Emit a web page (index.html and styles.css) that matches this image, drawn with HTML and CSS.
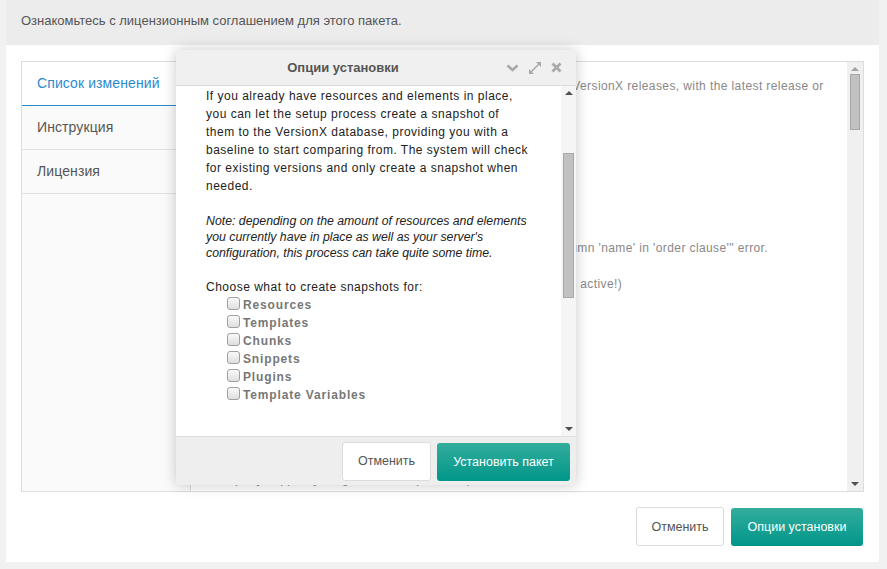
FILE: index.html
```html
<!DOCTYPE html>
<html lang="ru">
<head>
<meta charset="utf-8">
<title>Опции установки</title>
<link rel="stylesheet" href="styles.css">
</head>
<body>
<div class="panel">
  <div class="panel-head">Ознакомьтесь с лицензионным соглашением для этого пакета.</div>
  <div class="panel-body">
    <div class="tabs">
      <div class="tab-list">
        <div class="tab active">Список изменений</div>
        <div class="tab">Инструкция</div>
        <div class="tab">Лицензия</div>
      </div>
      <div class="tab-content">
        <div class="doc">
          <p>This file contains the complete changelog for all of the released VersionX releases, with the latest release or</p>
          <p class="gap9"></p>
          <p>- Fix "SQLSTATE[42S22]: Column not found: 1054 Unknown column 'name' in 'order clause'" error.</p>
          <p class="gap1"></p>
          <p>- Add ability to snapshot all elements on setup (when VersionX is active!)</p>
          <p class="gap10"></p>
          <p class="last">- Properly support your grid and compare templates</p>
        </div>
        <div class="vscroll">
          <span class="arrow up"></span>
          <span class="thumb big"></span>
          <span class="spacer"></span>
          <span class="arrow down"></span>
        </div>
      </div>
    </div>
    <div class="actions">
      <button class="btn">Отменить</button>
      <button class="btn primary">Опции установки</button>
    </div>
  </div>
</div>

<div class="modal">
  <div class="modal-head">
    <div class="modal-title">Опции установки</div>
    <div class="modal-tools">
      <svg class="tool" width="13" height="8" viewBox="0 0 13 8"><path d="M1.5 1.5 L6.5 6 L11.5 1.5" fill="none" stroke="#a9a9a9" stroke-width="2.6"/></svg>
      <svg class="tool" width="14" height="14" viewBox="0 0 14 14"><path d="M8 1 H13 V6 Z M1 8 V13 H6 Z" fill="#a9a9a9"/><path d="M3 11 L11 3" stroke="#a9a9a9" stroke-width="1.6"/></svg>
      <svg class="tool" width="11" height="11" viewBox="0 0 11 11"><path d="M1.5 1.5 L9.5 9.5 M9.5 1.5 L1.5 9.5" stroke="#a9a9a9" stroke-width="2.8"/></svg>
    </div>
  </div>
  <div class="modal-body">
    <div class="modal-text">
      <p>If you already have resources and elements in place,<br>you can let the setup process create a snapshot of<br>them to the VersionX database, providing you with a<br>baseline to start comparing from. The system will check<br>for existing versions and only create a snapshot when<br>needed.</p>
      <p class="note">Note: depending on the amount of resources and elements<br>you currently have in place as well as your server's<br>configuration, this process can take quite some time.</p>
      <p class="lead">Choose what to create snapshots for:</p>
      <ul class="checks">
        <li><span class="box"></span>Resources</li>
        <li><span class="box"></span>Templates</li>
        <li><span class="box"></span>Chunks</li>
        <li><span class="box"></span>Snippets</li>
        <li><span class="box"></span>Plugins</li>
        <li><span class="box"></span>Template Variables</li>
      </ul>
    </div>
    <div class="vscroll small">
      <span class="arrow up"></span>
      <span class="spacer top"></span>
      <span class="thumb"></span>
      <span class="spacer"></span>
      <span class="arrow down"></span>
    </div>
  </div>
  <div class="modal-foot">
    <button class="btn">Отменить</button>
    <button class="btn primary">Установить пакет</button>
  </div>
</div>
</body>
</html>
```
FILE: styles.css
```css
html, body {
  margin: 0;
  padding: 0;
}
body {
  background: #f1f1f1;
  font-family: "Liberation Sans", Arial, sans-serif;
  width: 887px;
  height: 569px;
  overflow: hidden;
  position: relative;
}
p { margin: 0; }

.panel {
  margin-left: 6px;
  width: 873px;
  height: 562px;
  background: #fff;
  display: flex;
  flex-direction: column;
}
.panel-head {
  background: #ececec;
  height: 45px;
  box-sizing: border-box;
  padding: 12px 15px 0;
  font-size: 13px;
  line-height: 18px;
  color: #555;
}
.panel-body {
  padding: 16px 15px 0 15px;
}
.tabs {
  display: flex;
  height: 431px;
  box-sizing: border-box;
  border: 1px solid #dddddd;
}
.tab-list {
  width: 168px;
  background: #fafafa;
  border-right: 1px solid #dddddd;
}
.tab {
  height: 43px;
  border-bottom: 1px solid #e2e2e2;
  padding-left: 15px;
  font-size: 14px;
  line-height: 43px;
  color: #555;
  letter-spacing: 0.1px;
}
.tab.active {
  background: #fff;
  color: #2b8acb;
  border-bottom: 1px solid #2b8acb;
}
.tab-content {
  flex: 1;
  display: flex;
  overflow: hidden;
}
.doc {
  flex: 1;
  padding: 15px 0 0 16px;
  font-size: 12px;
  line-height: 18px;
  letter-spacing: 0.4px;
  color: #888;
  white-space: nowrap;
  overflow: hidden;
}
.doc .gap1 { height: 18px; }
.doc .gap9 { height: 144px; }
.doc .gap10 { height: 177px; }
.vscroll {
  width: 16px;
  background: #f0f0f0;
  display: flex;
  flex-direction: column;
  align-items: center;
}
.vscroll .arrow {
  width: 0;
  height: 0;
  border-left: 4px solid transparent;
  border-right: 4px solid transparent;
}
.vscroll .arrow.up {
  border-bottom: 4px solid #a3a3a3;
  margin: 5px 0 3px;
}
.vscroll .arrow.down {
  border-top: 4px solid #505050;
  margin: 3px 0 5px;
}
.vscroll .thumb {
  width: 10px;
  box-sizing: border-box;
  background: #c1c1c1;
  border: 1px solid #a8a8a8;
  height: 56px;
}
.vscroll .spacer { flex: 1; }

.actions {
  display: flex;
  justify-content: flex-end;
  gap: 7px;
  padding: 15px 1px 0 0;
}
.btn {
  font-family: "Liberation Sans", Arial, sans-serif;
  font-size: 12.5px;
  color: #555;
  background: #fff;
  border: 1px solid #dcdcdc;
  border-radius: 3px;
  height: 39px;
  padding: 0;
  margin: 0;
  white-space: nowrap;
  box-sizing: border-box;
}
.btn.primary {
  color: #fff;
  border: 0;
  height: 38px;
  margin-top: 1px;
  background: linear-gradient(#33ad9c, #01968a);
}
.actions .btn:first-child { width: 88px; }
.actions .btn.primary { width: 132px; }

/* modal */
.modal {
  position: absolute;
  left: 176px;
  top: 50px;
  width: 400px;
  height: 435px;
  display: flex;
  flex-direction: column;
  background: #eee;
  border-radius: 3px;
  box-shadow: 0 0 14px rgba(0, 0, 0, 0.22);
  overflow: hidden;
}
.modal-head {
  height: 36px;
  flex: none;
  box-sizing: border-box;
  background: #f0f0f0;
  border-bottom: 1px solid #dcdcdc;
  display: flex;
  align-items: center;
}
.modal-title {
  flex: 1;
  padding-left: 12px;
  text-align: center;
  font-size: 13px;
  font-weight: bold;
  color: #555;
}
.modal-tools {
  display: flex;
  align-items: center;
  gap: 9px;
  padding: 0 14px 0 8px;
}
.modal-body {
  height: 351px;
  flex: none;
  background: #fff;
  display: flex;
  border-bottom: 1px solid #dedede;
  box-sizing: border-box;
}
.modal-text {
  flex: 1;
  padding: 1px 12px 0 30px;
  font-size: 12px;
  line-height: 18px;
  letter-spacing: 0.5px;
  color: #222;
  white-space: nowrap;
  overflow: hidden;
}
.modal-text p { margin-bottom: 18px; }
.modal-text p.note {
  font-style: italic;
  font-size: 12.3px;
  letter-spacing: 0;
  line-height: 16px;
  margin-bottom: 17px;
}
.modal-text p.lead { margin-bottom: 0; }
.checks {
  list-style: none;
  margin: 0;
  padding: 0 0 0 21px;
}
.checks li {
  display: flex;
  align-items: center;
  height: 18px;
  line-height: 14px;
  font-weight: bold;
  color: #777;
  letter-spacing: 0.85px;
}
.box {
  width: 11px;
  height: 11px;
  border: 1px solid #a0a0a0;
  border-radius: 3px;
  background: linear-gradient(#fafafa, #dedede);
  margin: -3px 3px 0 0;
}
.vscroll.small {
  width: 15px;
  background: #f5f5f5;
}
.vscroll.small .spacer.top { flex: 0 0 55px; }
.vscroll.small .thumb {
  width: 11px;
  height: 145px;
}
.vscroll.small .arrow.up {
  border-bottom-color: #505050;
}
.modal-foot {
  flex: 1;
  display: flex;
  justify-content: flex-end;
  align-items: center;
  gap: 6px;
  padding: 0 6px 0 0;
  background: #eee;
}
.modal-foot .btn:first-child { width: 89px; }
.modal-foot .btn.primary { width: 133px; margin-top: 2px; }
```
